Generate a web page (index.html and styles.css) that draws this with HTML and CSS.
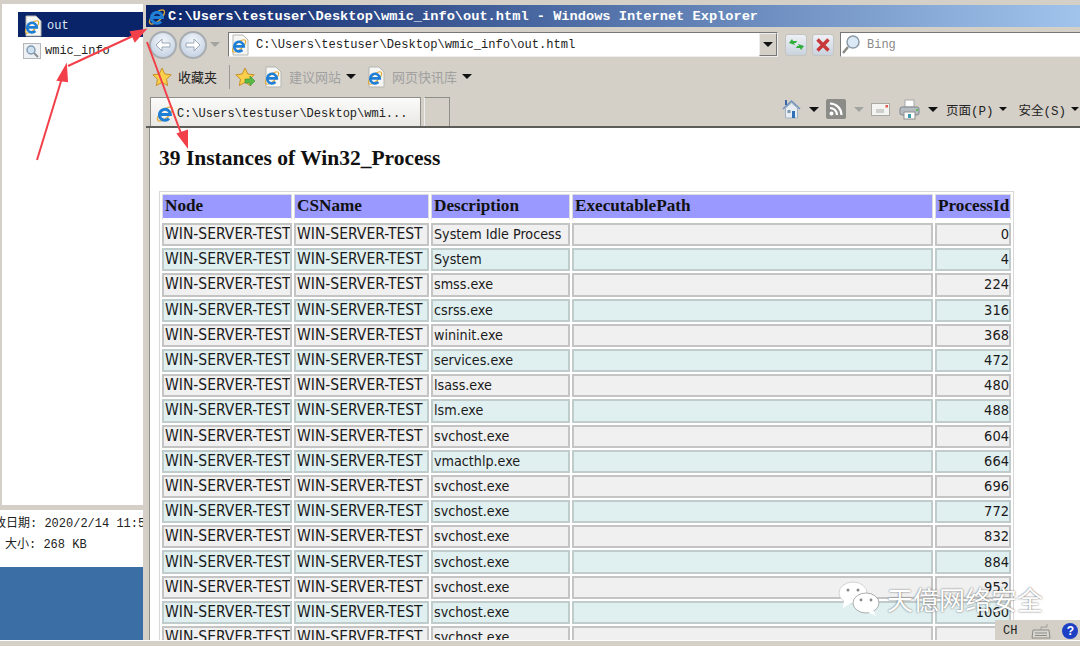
FILE: index.html
```html
<!DOCTYPE html>
<html lang="zh">
<head>
    <meta charset="UTF-8">
    <meta name="viewport" content="width=device-width, initial-scale=1.0">
    <title>out.html</title>
    <link rel="stylesheet" href="styles.css">
</head>
<body>
    <svg class="defs" width="0" height="0">
        <defs>
            <symbol id="ie" viewBox="0 0 20 20">
                <ellipse cx="10" cy="10" rx="9.5" ry="4" transform="rotate(-42 10 10)" fill="none" stroke="#e3ac35" stroke-width="1.3"/>
                <path d="M4.6 10.5h10.8A5.5 5.5 0 1 0 14 14.5" fill="none" stroke="#1f7fd6" stroke-width="3"/>
            </symbol>
            <symbol id="iepage" viewBox="0 0 20 22">
                <path d="M3 1h10l5 5v15H3z" fill="#f6f6f4" stroke="#b5b5b0"/>
                <ellipse cx="9" cy="12" rx="8.5" ry="3.4" transform="rotate(-42 9 12)" fill="none" stroke="#e3ac35" stroke-width="1.2"/>
                <path d="M4.4 12.4h9.4A4.8 4.8 0 1 0 12.4 16" fill="none" stroke="#1f7fd6" stroke-width="2.6"/>
            </symbol>
            <symbol id="star" viewBox="0 0 20 20">
                <path d="M10 1l2.8 6 6.4.8-4.7 4.4 1.2 6.4L10 15.4l-5.7 3.2 1.2-6.4L.8 7.8 7.2 7z" fill="#f9cf4b" stroke="#c7912c"/>
            </symbol>
        </defs>
    </svg>

    <div class="desk">
        <aside class="explorer">
            <div class="file-list">
                <div class="file selected">
                    <svg class="ico20" width="20" height="22"><use href="#iepage"/></svg>
                    <span>out</span>
                </div>
                <div class="file">
                    <svg width="18" height="16" viewBox="0 0 18 16">
                        <rect x=".5" y=".5" width="17" height="15" fill="#eef0f2" stroke="#b4b8bc"/>
                        <circle cx="8" cy="7" r="4" fill="#cfe0ee" stroke="#7f9cb6" stroke-width="1.4"/>
                        <path d="M11 10l4 4" stroke="#8a8f94" stroke-width="2"/>
                    </svg>
                    <span>wmic_info</span>
                </div>
            </div>
            <div class="details">
                <p class="date">改日期: 2020/2/14 11:56</p>
                <p class="size">大小: 268 KB</p>
            </div>
            <div class="desktop-blue"></div>
        </aside>

        <main class="ie">
            <div class="titlebar">
                <svg width="20" height="20"><use href="#ie"/></svg>
                <span>C:\Users\testuser\Desktop\wmic_info\out.html - Windows Internet Explorer</span>
            </div>

            <div class="navbar">
                <span class="round">
                    <svg width="16" height="14" viewBox="0 0 16 14"><path d="M7 1L1 7l6 6V9h8V5H7z" fill="#fff" stroke="#9aa7b8"/></svg>
                </span>
                <span class="round round-next">
                    <svg width="16" height="14" viewBox="0 0 16 14"><path d="M9 1l6 6-6 6V9H1V5h8z" fill="#fff" stroke="#9aa7b8"/></svg>
                </span>
                <i class="caret caret-grey nav-caret"></i>
                <div class="address">
                    <svg width="20" height="22"><use href="#iepage"/></svg>
                    <span class="address-text">C:\Users\testuser\Desktop\wmic_info\out.html</span>
                    <span class="drop"><i class="caret"></i></span>
                </div>
                <span class="tool">
                    <svg width="17" height="15" viewBox="0 0 17 15"><path d="M1 6l3-4 1 2h4l-1 2H6l1 2zM16 9l-3 4-1-2H8l1-2h2l-1-2z" fill="#2fae3a"/></svg>
                </span>
                <span class="tool tool-stop">
                    <svg width="14" height="14" viewBox="0 0 14 14"><path d="M1.5 1.5l11 11M12.5 1.5l-11 11" stroke="#c8383a" stroke-width="3.4"/></svg>
                </span>
                <div class="search">
                    <svg width="20" height="22" viewBox="0 0 20 22"><circle cx="12" cy="8" r="6" fill="#dbe9f6" stroke="#8c9ba8" stroke-width="1.5"/><path d="M7 13l-5 6" stroke="#8a8a84" stroke-width="2.5"/></svg>
                    <span>Bing</span>
                </div>
            </div>

            <div class="favbar">
                <svg class="fav-star" width="20" height="20"><use href="#star"/></svg>
                <span class="fav-label">收藏夹</span>
                <span class="divider"></span>
                <svg class="fav-add" width="21" height="20" viewBox="0 0 21 20">
                    <use href="#star" width="20" height="20"/>
                    <path d="M10 12h5V9l5 5-5 5v-3h-5z" fill="#58b947" stroke="#3d8e30" stroke-width=".6"/>
                </svg>
                <svg class="fav-page" width="20" height="22"><use href="#iepage"/></svg>
                <span class="fav-link">建议网站</span>
                <i class="caret fav-caret"></i>
                <svg class="fav-page2" width="20" height="22"><use href="#iepage"/></svg>
                <span class="fav-link">网页快讯库</span>
                <i class="caret fav-caret"></i>
            </div>

            <div class="tabbar">
                <div class="tab">
                    <svg width="20" height="20"><use href="#ie"/></svg>
                    <span>C:\Users\testuser\Desktop\wmi...</span>
                </div>
                <div class="tab-new"></div>
                <div class="commands">
                    <svg width="19" height="20" viewBox="0 0 19 20"><path d="M1 10l8.500-8 8.500 8" fill="none" stroke="#6f93bd" stroke-width="1.6"/><path d="M3.500 9l6-5 6 5v10h-12z" fill="#e8edf2" stroke="#9fb2c6"/><rect x="10" y="12" width="3" height="7" fill="#2f6fb5"/><rect x="5.500" y="11" width="3" height="3" fill="#7f98b2"/><rect x="3" y="1" width="2" height="5" fill="#3d66a8"/></svg>
                    <i class="caret cmd-caret"></i>
                    <span class="rss">
                        <svg width="14" height="14" viewBox="0 0 14 14"><circle cx="2.500" cy="11.500" r="2" fill="#fff"/><path d="M1 6a7 7 0 0 1 7 7M1 1.500a11.500 11.500 0 0 1 11.500 11.500" fill="none" stroke="#fff" stroke-width="2.200"/></svg>
                    </span>
                    <i class="caret caret-grey cmd-caret"></i>
                    <svg class="cmd-mail" width="19" height="13" viewBox="0 0 19 13"><rect x=".5" y=".5" width="18" height="12" fill="#f4f4f2" stroke="#a9a9a4"/><rect x="14.500" y="2" width="2.500" height="2.500" fill="#e0574f"/><path d="M5 7h8M5 9h8" stroke="#a9a9a4"/></svg>
                    <svg class="cmd-print" width="21" height="21" viewBox="0 0 21 21"><rect x="6" y="1" width="9" height="7" fill="#fff" stroke="#a8a8a8"/><rect x="1" y="8" width="19" height="8" rx="2" fill="#b6bcc2" stroke="#7e858c"/><rect x="5" y="13" width="11" height="7" fill="#fff" stroke="#8e8e8e"/><rect x="9" y="15" width="3" height="4" fill="#3c9aa8"/><rect x="17" y="10" width="2" height="2" fill="#59c05a"/></svg>
                    <i class="caret cmd-caret"></i>
                    <span class="cmd-text">页面(P)</span>
                    <i class="caret cmd-caret-sm"></i>
                    <span class="cmd-text cmd-text-next">安全(S)</span>
                    <i class="caret cmd-caret-sm"></i>
                </div>
            </div>

            <div class="page">
                <h2>39 Instances of Win32_Process</h2>
                <table>
                    <thead>
                        <tr><th class="c1">Node</th><th class="c2">CSName</th><th class="c3">Description</th><th class="c4">ExecutablePath</th><th class="c5">ProcessId</th></tr>
                    </thead>
                    <tbody>
                        <tr><td>WIN-SERVER-TEST</td><td>WIN-SERVER-TEST</td><td class="desc">System Idle Process</td><td></td><td class="num">0</td></tr>
                        <tr><td>WIN-SERVER-TEST</td><td>WIN-SERVER-TEST</td><td class="desc">System</td><td></td><td class="num">4</td></tr>
                        <tr><td>WIN-SERVER-TEST</td><td>WIN-SERVER-TEST</td><td class="desc">smss.exe</td><td></td><td class="num">224</td></tr>
                        <tr><td>WIN-SERVER-TEST</td><td>WIN-SERVER-TEST</td><td class="desc">csrss.exe</td><td></td><td class="num">316</td></tr>
                        <tr><td>WIN-SERVER-TEST</td><td>WIN-SERVER-TEST</td><td class="desc">wininit.exe</td><td></td><td class="num">368</td></tr>
                        <tr><td>WIN-SERVER-TEST</td><td>WIN-SERVER-TEST</td><td class="desc">services.exe</td><td></td><td class="num">472</td></tr>
                        <tr><td>WIN-SERVER-TEST</td><td>WIN-SERVER-TEST</td><td class="desc">lsass.exe</td><td></td><td class="num">480</td></tr>
                        <tr><td>WIN-SERVER-TEST</td><td>WIN-SERVER-TEST</td><td class="desc">lsm.exe</td><td></td><td class="num">488</td></tr>
                        <tr><td>WIN-SERVER-TEST</td><td>WIN-SERVER-TEST</td><td class="desc">svchost.exe</td><td></td><td class="num">604</td></tr>
                        <tr><td>WIN-SERVER-TEST</td><td>WIN-SERVER-TEST</td><td class="desc">vmacthlp.exe</td><td></td><td class="num">664</td></tr>
                        <tr><td>WIN-SERVER-TEST</td><td>WIN-SERVER-TEST</td><td class="desc">svchost.exe</td><td></td><td class="num">696</td></tr>
                        <tr><td>WIN-SERVER-TEST</td><td>WIN-SERVER-TEST</td><td class="desc">svchost.exe</td><td></td><td class="num">772</td></tr>
                        <tr><td>WIN-SERVER-TEST</td><td>WIN-SERVER-TEST</td><td class="desc">svchost.exe</td><td></td><td class="num">832</td></tr>
                        <tr><td>WIN-SERVER-TEST</td><td>WIN-SERVER-TEST</td><td class="desc">svchost.exe</td><td></td><td class="num">884</td></tr>
                        <tr><td>WIN-SERVER-TEST</td><td>WIN-SERVER-TEST</td><td class="desc">svchost.exe</td><td></td><td class="num">952</td></tr>
                        <tr><td>WIN-SERVER-TEST</td><td>WIN-SERVER-TEST</td><td class="desc">svchost.exe</td><td></td><td class="num">1060</td></tr>
                        <tr><td>WIN-SERVER-TEST</td><td>WIN-SERVER-TEST</td><td class="desc">svchost.exe</td><td></td><td class="num">3</td></tr>
                    </tbody>
                </table>
            </div>
        </main>
    </div>
    <div class="bottom-strip"></div>

    <!-- annotation arrows drawn over the screenshot -->
    <svg class="arrows" width="1080" height="646" viewBox="0 0 1080 646">
        <g stroke="#f2404a" stroke-width="2" fill="#f2404a">
            <path d="M37 160L62 78" fill="none"/>
            <path d="M66 66L58 80L67 81z"/>
            <path d="M68 66L135 35" fill="none"/>
            <path d="M145 30L131 32L135 41z"/>
            <path d="M147 42L182 136" fill="none"/>
            <path d="M187 146L178 134L187 131z"/>
        </g>
    </svg>

    <div class="langbar">
        <span class="lang">CH</span>
        <svg width="20" height="16" viewBox="0 0 20 16"><path d="M2 7h16l1 8H1z" fill="#d8d6d0" stroke="#8c8c86"/><path d="M4 10h12M4 12.500h12" stroke="#8c8c86"/><path d="M10 7V4h6V1" fill="none" stroke="#a0a09a"/></svg>
        <span class="help">?</span>
    </div>

    <div class="watermark">
        <svg width="42" height="36" viewBox="0 0 42 36">
            <ellipse cx="15" cy="12" rx="14" ry="11" fill="#fff" stroke="#bbb" stroke-width=".6"/>
            <path d="M6 19l-1 8 8-5z" fill="#fff"/>
            <ellipse cx="28" cy="22" rx="13" ry="10" fill="#fff" stroke="#999" stroke-width=".8"/>
            <path d="M35 29l3 6-8-4z" fill="#fff"/>
            <circle cx="10" cy="9" r="1.500" fill="#888"/><circle cx="20" cy="9" r="1.500" fill="#888"/>
            <circle cx="23" cy="19" r="1.400" fill="#888"/><circle cx="33" cy="19" r="1.400" fill="#888"/>
        </svg>
        <span>天億网络安全</span>
    </div>
</body>
</html>
```

FILE: styles.css
```css
* {
    box-sizing: border-box;
}
html, body {
    margin: 0;
    height: 646px;
    overflow: hidden;
}
body {
    position: relative;
    width: 1080px;
    background: #d4d0c8;
    font-family: "Liberation Mono", "Noto Sans CJK SC", monospace;
    font-size: 12px;
    color: #222;
}
p, h2 {
    margin: 0;
}
svg {
    display: block;
    flex: none;
}
.defs {
    position: absolute;
}
.desk {
    display: flex;
    height: 640px;
}

/* left explorer pane */
.explorer {
    width: 146px;
    display: flex;
    flex-direction: column;
    padding: 4px 3px 0 2px;
    overflow: hidden;
}
.file-list {
    height: 501px;
    background: #fff;
    padding: 8px 0 0 16px;
}
.file {
    height: 25px;
    display: flex;
    align-items: center;
    gap: 4px;
    padding: 2px 0 0 5px;
}
.file.selected {
    background: #0a246a;
    color: #dfe6f5;
}
.details {
    height: 57px;
    margin-top: 5px;
    background: #fff;
    margin-left: -2px;
    padding-top: 4px;
    white-space: nowrap;
    overflow: hidden;
}
.details p {
    line-height: 21px;
}
.date {
    margin-left: -6px;
}
.size {
    margin-left: 5px;
}
.desktop-blue {
    flex: 1;
    margin-left: -2px;
    background: #3a6ea5;
}

/* IE window */
.ie {
    flex: 1;
    margin-top: 5px;
    min-width: 0;
    display: flex;
    flex-direction: column;
    overflow: hidden;
}
.titlebar {
    height: 22px;
    flex: none;
    display: flex;
    align-items: center;
    gap: 1px;
    padding: 1px 0 0 1px;
    background: linear-gradient(90deg, #0a246a, #a0c4ec);
    color: #fff;
    font-size: 13.67px;
    font-weight: bold;
}
.navbar {
    height: 33px;
    flex: none;
    display: flex;
    align-items: center;
    padding: 2px 0 0 3px;
}
.round {
    width: 28px;
    height: 28px;
    border-radius: 50%;
    border: 2px solid #a9acb0;
    background: radial-gradient(circle at 50% 35%, #f4f7fb, #b9c9de);
    display: flex;
    align-items: center;
    justify-content: center;
}
.round-next {
    margin-left: 2px;
}
.caret {
    display: block;
    flex: none;
    width: 0;
    height: 0;
    border-left: 5px solid transparent;
    border-right: 5px solid transparent;
    border-top: 5px solid #111;
}
.caret-grey {
    border-top-color: #a3a3a0;
}
.nav-caret {
    margin-left: 3px;
}
.address {
    width: 550px;
    height: 25px;
    margin-left: 8px;
    display: flex;
    align-items: center;
    background: #fff;
    border: 1px solid #777;
    border-bottom-color: #eee;
    border-right-color: #eee;
    padding-left: 1px;
}
.address-text {
    margin-left: 6px;
    font-size: 12.100px;
    flex: 1;
}
.drop {
    width: 18px;
    height: 23px;
    background: #d4d0c8;
    border: 1px solid #777;
    border-top-color: #eee;
    border-left-color: #eee;
    display: flex;
    align-items: center;
    justify-content: center;
}
.tool {
    width: 22px;
    height: 22px;
    margin-left: 7px;
    border: 1px solid #c4c4c0;
    border-radius: 3px;
    background: linear-gradient(#eef1f6, #c9d2de);
    display: flex;
    align-items: center;
    justify-content: center;
}
.tool-stop {
    margin-left: 5px;
}
.search {
    flex: 1;
    height: 25px;
    margin-left: 6px;
    display: flex;
    align-items: center;
    gap: 6px;
    background: #fff;
    border: 1px solid #777;
    border-right: 0;
    border-bottom-color: #eee;
    color: #8a8a8a;
}
.favbar {
    height: 37px;
    flex: none;
    display: flex;
    align-items: center;
    padding-bottom: 4px;
    font-size: 13px;
}
.fav-star {
    margin-left: 6px;
}
.fav-label {
    margin-left: 6px;
}
.divider {
    width: 1px;
    height: 24px;
    margin: 0 5px 0 12px;
    background: #9a9a94;
}
.fav-page {
    margin-left: 7px;
}
.fav-page2 {
    margin-left: 10px;
}
.fav-link {
    margin-left: 6px;
    color: #a0a0a0;
}
.fav-caret {
    margin-left: 5px;
}
.tabbar {
    height: 31px;
    flex: none;
    display: flex;
    align-items: flex-end;
    padding-left: 4px;
    border-bottom: 2px solid #5c5c58;
}
.tab {
    width: 271px;
    height: 29px;
    display: flex;
    align-items: center;
    gap: 2px;
    padding: 3px 0 0 4px;
    background: linear-gradient(#fbfbfa, #e9e8e4);
    border: 1px solid #8f8f8a;
    border-bottom: 0;
}
.tab-new {
    width: 26px;
    height: 29px;
    margin-left: 3px;
    border: 1px solid #8f8f8a;
    border-bottom: 0;
    border-left-color: #eee;
}
.commands {
    flex: 1;
    align-self: center;
    display: flex;
    align-items: center;
    padding: 0 0 5px 332px;
}
.cmd-caret {
    margin-left: 8px;
}
.rss {
    width: 20px;
    height: 20px;
    margin-left: 7px;
    border-radius: 2px;
    background: #8b8b88;
    display: flex;
    align-items: center;
    justify-content: center;
}
.cmd-mail {
    margin-left: 7px;
}
.cmd-print {
    margin-left: 9px;
}
.cmd-text {
    margin-left: 8px;
    white-space: nowrap;
    font-size: 12.500px;
}
.cmd-text-next {
    margin-left: 12px;
}
.cmd-caret-sm {
    display: block;
    flex: none;
    width: 0;
    height: 0;
    margin-left: 5px;
    border-left: 4px solid transparent;
    border-right: 4px solid transparent;
    border-top: 4px solid #111;
}

/* page content */
.page {
    flex: 1;
    min-height: 0;
    margin-left: 3px;
    padding: 17px 0 0 9px;
    background: #fff;
    overflow: hidden;
    border-left: 1px solid #8f8f8a;
}
.page h2 {
    height: 26px;
    margin-bottom: 20px;
    font: bold 21.500px/26px "Liberation Serif", serif;
    color: #111;
}
table {
    table-layout: fixed;
    width: 855px;
    border: 1px solid #d8d8d8;
    border-spacing: 2px;
    color: #1a1a1a;
    font: 15.500px "DejaVu Sans Condensed", "DejaVu Sans", sans-serif;
    font-stretch: condensed;
}
th {
    height: 27px;
    padding: 0 0 1px 2px;
    background: #9999ff;
    background-clip: padding-box;
    border: 1px solid #dcdcdc;
    border-bottom: 3px solid #fff;
    text-align: left;
    vertical-align: middle;
    font: bold 17.200px "Liberation Serif", serif;
    color: #111;
}
.c1 { width: 130px; }
.c2 { width: 135px; }
.c3 { width: 139px; }
.c5 { width: 76px; }
td {
    height: 23.200px;
    padding: 1px 1px 1px 1px;
    border: 2px solid #c4c4c4;
    background: #f0f0f0;
    white-space: nowrap;
    overflow: hidden;
    line-height: 17px;
}
tbody tr:nth-child(even) td {
    background: #e0f0f0;
    border-color: #c0cccc;
}
td.desc {
    font-size: 14.200px;
}
td.num {
    padding-right: 0;
    text-align: right;
    font-size: 14.500px;
}
.bottom-strip {
    height: 6px;
    border-top: 1px solid #fff;
    background: #d4d0c8;
}

/* things on top of the screenshot */
.arrows {
    position: absolute;
    left: 0;
    top: 0;
}
.langbar {
    position: absolute;
    right: 0;
    top: 620px;
    width: 85px;
    height: 20px;
    display: flex;
    align-items: center;
    padding: 1px 0 0 8px;
    gap: 14px;
    background: #d4d0c8;
}
.help {
    width: 16px;
    height: 16px;
    margin-left: -3px;
    border-radius: 50%;
    background: #1c3fc4;
    color: #fff;
    font: bold 12px/16px "Liberation Sans", sans-serif;
    text-align: center;
}
.watermark {
    position: absolute;
    left: 838px;
    top: 580px;
    display: flex;
    align-items: center;
    gap: 7px;
    color: #fff;
    font: 26px "Noto Sans CJK SC", sans-serif;
    text-shadow: 0 0 2px #555;
}
```
